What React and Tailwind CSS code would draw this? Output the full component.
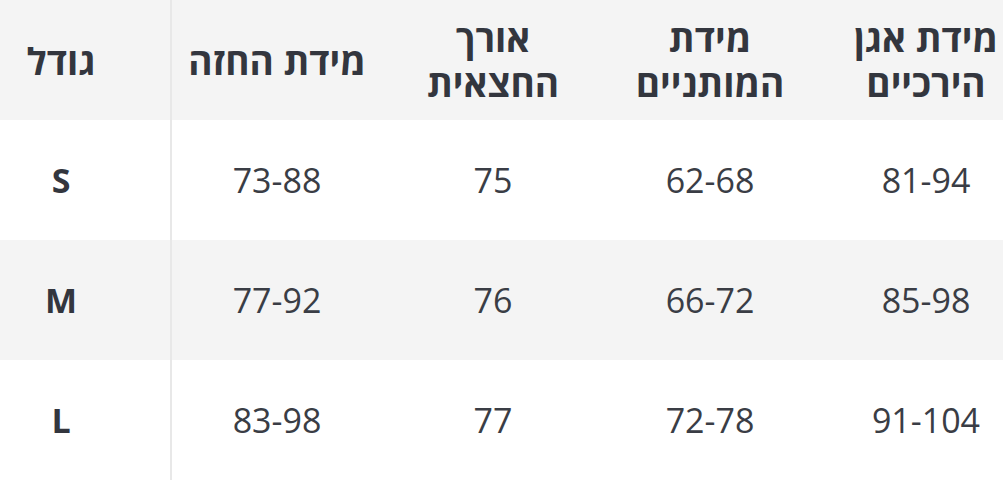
import React from 'react';

const headers = [
  ['גודל'],
  ['מידת החזה'],
  ['אורך', 'החצאית'],
  ['מידת', 'המותניים'],
  ['מידת אגן', 'הירכיים'],
];

const rows = [
  ['S', '73-88', '75', '62-68', '81-94'],
  ['M', '77-92', '76', '66-72', '85-98'],
  ['L', '83-98', '77', '72-78', '91-104'],
];

// per-column cell classes (offsets so the content centres line up)
const colClass = [
  'pr-[48px]',
  'border-l-2 border-[#e8e8e8] pr-[6px]',
  '',
  '',
  'pl-[2px]',
];

const App = () => {
  return (
    <div
      className="min-h-screen bg-white text-[#3a3d45]"
      style={{ fontFamily: '"Open Sans", "DejaVu Sans", sans-serif' }}
    >
      <div className="w-[1003px] overflow-hidden">
        <div className="grid w-[1028px] grid-cols-[170px_218px_210px_224px_206px]">
          {/* Header */}
          {headers.map((lines, i) => (
            <div
              key={i}
              dir="rtl"
              className={`h-[120px] bg-[#f4f4f4] flex items-center justify-center text-[37px] font-bold leading-[45px] text-[#33363e] ${colClass[i]}`}
            >
              <p className="whitespace-nowrap text-center">
                {lines.map((l, j) => (
                  <React.Fragment key={j}>
                    {j > 0 && <br />}
                    {l}
                  </React.Fragment>
                ))}
              </p>
            </div>
          ))}

          {/* Rows */}
          {rows.map((row, r) =>
            row.map((cell, i) => (
              <div
                key={`${r}-${i}`}
                className={`h-[120px] flex items-center justify-center text-[34px] ${
                  r === 1 ? 'bg-[#f4f4f4]' : 'bg-white'
                } ${i === 0 ? 'font-bold text-[#33363e]' : 'font-normal'} ${colClass[i]}`}
              >
                {cell}
              </div>
            ))
          )}
        </div>
      </div>
    </div>
  );
};

export default App;
